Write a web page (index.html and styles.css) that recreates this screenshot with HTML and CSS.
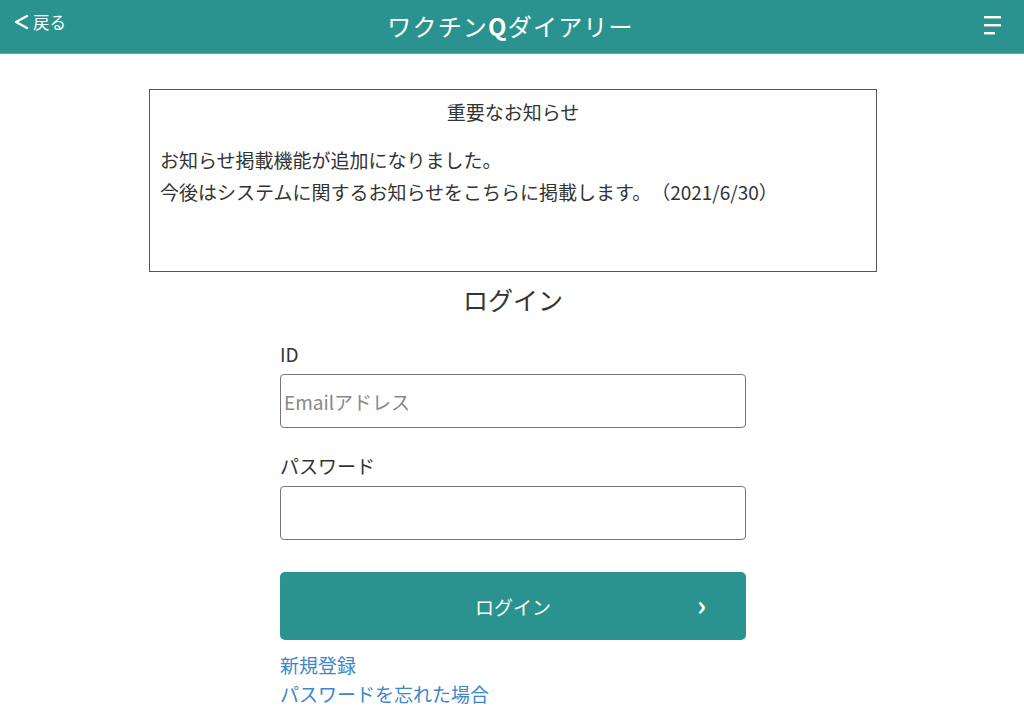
FILE: index.html
```html
<!DOCTYPE html>
<html lang="ja">
<head>
<meta charset="utf-8">
<title>ワクチンQダイアリー</title>
<link rel="stylesheet" href="styles.css">
</head>
<body>
<header class="topbar">
  <a class="back" href="#">
    <svg class="back-icon" width="18" height="18" viewBox="0 0 18 18"><path d="M15 3 L4 9 L15 15" fill="none" stroke="#fff" stroke-width="2.4" stroke-linecap="round" stroke-linejoin="round"/></svg>
    <span>戻る</span>
  </a>
  <h1 class="title">ワクチン<b>Q</b>ダイアリー</h1>
  <button class="menu" aria-label="menu">
    <svg width="20" height="22" viewBox="0 0 20 22"><rect x="1" y="2" width="17" height="2.4" fill="#fff"/><rect x="1" y="10" width="17" height="2.4" fill="#fff"/><rect x="1" y="18" width="11" height="2.4" fill="#fff"/></svg>
  </button>
</header>
<main class="content">
  <section class="notice">
    <h2 class="notice-title">重要なお知らせ</h2>
    <p class="notice-body">お知らせ掲載機能が追加になりました。<br>今後はシステムに関するお知らせをこちらに掲載します。（2021/6/30）</p>
  </section>
  <h2 class="login-title">ログイン</h2>
  <form class="form">
    <label class="label">ID</label>
    <input class="input" type="text" placeholder="Emailアドレス">
    <label class="label label-pw">パスワード</label>
    <input class="input" type="password">
    <button class="submit" type="button"><span>ログイン</span><span class="chev">›</span></button>
    <div class="links">
      <a href="#">新規登録</a>
      <a href="#">パスワードを忘れた場合</a>
    </div>
  </form>
</main>
</body>
</html>
```
FILE: styles.css
```css
* { box-sizing: border-box; }
body {
  margin: 0;
  font-family: "Noto Sans CJK JP", "Noto Sans", sans-serif;
  color: #333;
  background: #fff;
  text-spacing-trim: space-all;
}
.topbar {
  height: 54px;
  background: #2a9390;
  display: flex;
  align-items: center;
  justify-content: space-between;
  padding: 0 21px 2px 12px;
  border-bottom: 1px solid #5fb0ad;
}
.back {
  display: flex;
  align-items: center;
  gap: 3px;
  color: #fff;
  text-decoration: none;
  font-size: 16.5px;
  width: 120px;
  margin-top: -8px;
}
.title {
  margin: 0 0 0 6px;
  font-size: 24px;
  font-weight: 400;
  color: #fff;
  letter-spacing: 1.2px;
}
.title b { font-weight: 700; }
.menu {
  width: 120px;
  display: flex;
  justify-content: flex-end;
  background: none;
  border: 0;
  padding: 0;
  margin-top: -2px;
}
.content {
  display: flex;
  flex-direction: column;
  align-items: center;
  padding-top: 35px;
  padding-left: 2px;
}
.notice {
  width: 728px;
  height: 183px;
  border: 1px solid #555;
  padding: 8px 10px;
}
.notice-title {
  margin: 0 0 18px;
  text-align: center;
  font-size: 19px;
  font-weight: 400;
  line-height: 28px;
}
.notice-body {
  margin: 0;
  font-size: 19px;
  line-height: 32px;
}
.login-title {
  margin: 10px 0 0;
  font-size: 25px;
  font-weight: 400;
  line-height: 34px;
}
.form {
  width: 466px;
  display: flex;
  flex-direction: column;
  margin-top: 26px;
}
.label {
  font-size: 19px;
  line-height: 24px;
  margin-bottom: 8px;
}
.label-pw { margin-top: 26px; }
.input {
  height: 54px;
  border: 1px solid #777;
  border-radius: 4px;
  font-family: inherit;
  font-size: 19px;
  padding: 0 3px;
  color: #333;
}
.input::placeholder { color: #888; }
.submit {
  margin-top: 32px;
  height: 68px;
  background: #2a9390;
  border: 0;
  border-radius: 5px;
  color: #fff;
  font-family: inherit;
  font-size: 19px;
  position: relative;
  display: flex;
  align-items: center;
  justify-content: center;
}
.chev {
  position: absolute;
  right: 40px;
  top: 50%;
  transform: translateY(-55%);
  font-size: 28px;
  font-weight: 700;
}
.links {
  display: flex;
  flex-direction: column;
  margin-top: 10px;
}
.links a {
  color: #3b87c9;
  text-decoration: none;
  font-size: 19px;
  line-height: 29px;
}
```
